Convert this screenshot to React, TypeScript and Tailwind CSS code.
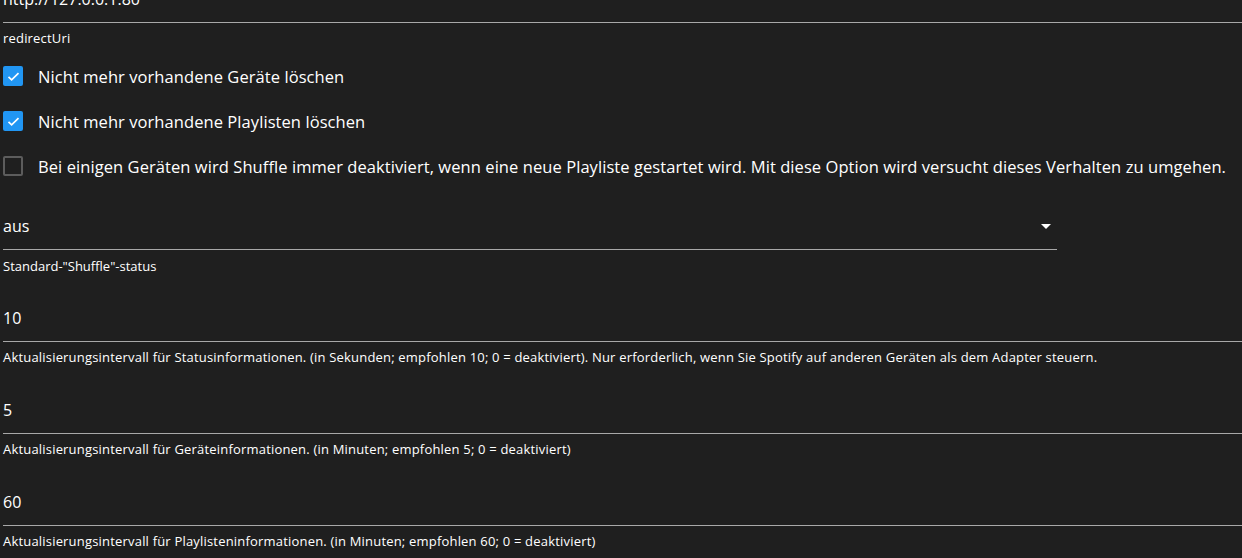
import React from 'react';

const font = { fontFamily: '"Open Sans", "Noto Sans", sans-serif' };

function TextField({ value, helper }: { value: string; helper: string }) {
  return (
    <div className="w-full">
      <div className="h-[36px] border-b border-[#a8a8a8] flex items-start">
        <span className="h-6 leading-6 text-[16px] text-white">{value}</span>
      </div>
      <div className="mt-[7px] h-4 leading-4 text-[13px] tracking-[0.19px] text-white whitespace-nowrap">{helper}</div>
    </div>
  );
}

function CheckRow({ checked, label }: { checked: boolean; label: string }) {
  return (
    <div className="flex items-center h-5">
      {checked ? (
        <span className="w-5 h-5 rounded-[2px] bg-[#2196f3] flex items-center justify-center">
          <svg viewBox="0 0 24 24" className="w-[15px] h-[15px]" fill="none" stroke="white" strokeWidth="2.6">
            <path d="M4 12.5l5 5L20 6.5" />
          </svg>
        </span>
      ) : (
        <span className="w-5 h-5 rounded-[2px] border-2 border-[#5c5c5c]" />
      )}
      <span className="ml-[15px] mt-[2px] text-[16.5px] tracking-[0.07px] leading-5 text-white whitespace-nowrap">{label}</span>
    </div>
  );
}

export default function App() {
  return (
    <div className="w-[1242px] h-[558px] overflow-hidden bg-[#1f1f1f]" style={font}>
      <div className="pl-[3px] -mt-[13px]">
        <TextField value="http://127.0.0.1:80" helper="redirectUri" />
        <div className="mt-[20px] flex flex-col gap-[25px]">
          <CheckRow checked label="Nicht mehr vorhandene Geräte löschen" />
          <CheckRow checked label="Nicht mehr vorhandene Playlisten löschen" />
          <CheckRow
            checked={false}
            label="Bei einigen Geräten wird Shuffle immer deaktiviert, wenn eine neue Playliste gestartet wird. Mit diese Option wird versucht dieses Verhalten zu umgehen."
          />
        </div>
        <div className="mt-[38px] w-[1054px]">
          <div className="h-[36px] border-b border-[#a8a8a8] flex items-start justify-between">
            <span className="h-6 leading-6 text-[16px] text-white">aus</span>
            <svg viewBox="0 0 10 5" className="w-[10px] h-[5px] mt-[10px] mr-[6px]" fill="white">
              <path d="M0 0h10L5 5z" />
            </svg>
          </div>
          <div className="mt-[8px] h-4 leading-4 text-[13px] text-white">Standard-"Shuffle"-status</div>
        </div>
        <div className="mt-[32px] flex flex-col gap-[33px]">
          <TextField
            value="10"
            helper="Aktualisierungsintervall für Statusinformationen. (in Sekunden; empfohlen 10; 0 = deaktiviert). Nur erforderlich, wenn Sie Spotify auf anderen Geräten als dem Adapter steuern."
          />
          <TextField
            value="5"
            helper="Aktualisierungsintervall für Geräteinformationen. (in Minuten; empfohlen 5; 0 = deaktiviert)"
          />
          <TextField
            value="60"
            helper="Aktualisierungsintervall für Playlisteninformationen. (in Minuten; empfohlen 60; 0 = deaktiviert)"
          />
        </div>
      </div>
    </div>
  );
}
